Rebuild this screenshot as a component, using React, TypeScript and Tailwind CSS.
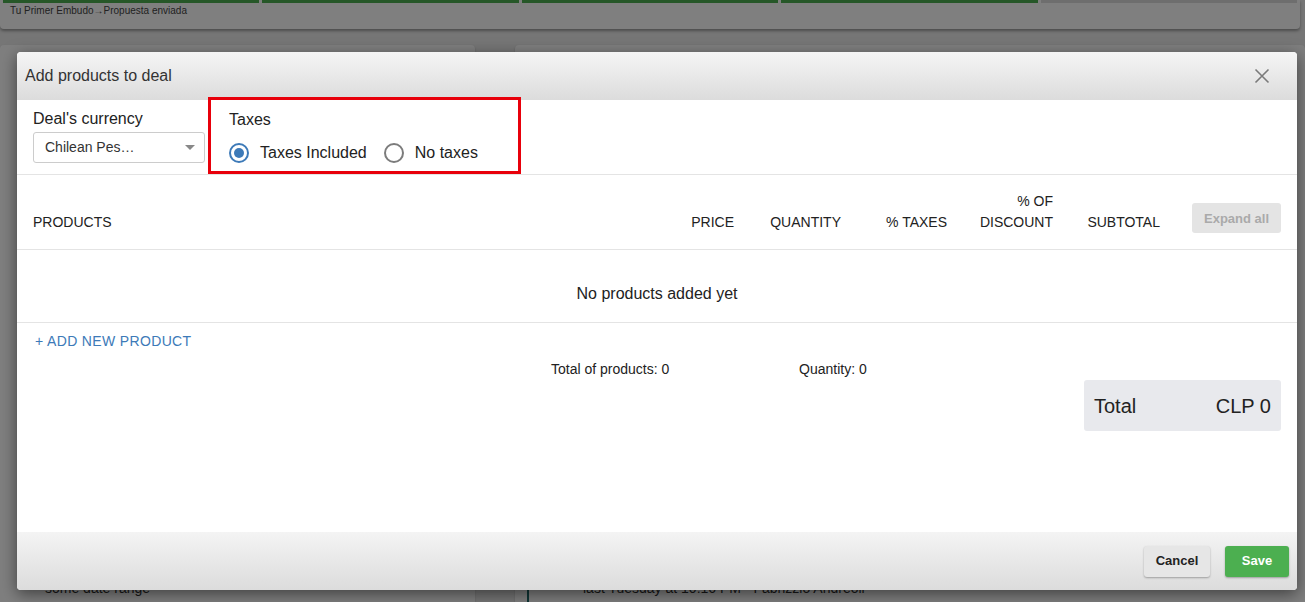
import React from 'react';

function Radio({ checked }: { checked: boolean }) {
  if (checked) {
    return (
      <span className="block shrink-0 w-[20px] h-[20px] rounded-full border-[2px] border-[#3d7ab8] flex items-center justify-center bg-white">
        <span className="block w-[10px] h-[10px] rounded-full bg-[#3d7ab8]" />
      </span>
    );
  }
  return <span className="block shrink-0 w-[20px] h-[20px] rounded-full border-[2px] border-[#7c7c7c] bg-white" />;
}

export default function App() {
  const columns = [
    { label: 'PRICE', w: 'w-[80px]' },
    { label: 'QUANTITY', w: 'w-[107px]' },
    { label: '% TAXES', w: 'w-[106px]' },
    { label: '% OF DISCOUNT', w: 'w-[106px]', two: true },
    { label: 'SUBTOTAL', w: 'w-[107px]' },
  ];

  return (
    <div className="relative w-[1305px] h-[602px] overflow-hidden bg-[#ececec] font-['Liberation_Sans',Arial,sans-serif] text-[#222]">
      {/* Page behind the dialog */}
      <div className="w-[1300px] h-[29px] bg-white rounded-b-[4px] shadow-[0_2px_3px_rgba(0,0,0,0.35)]">
        <div className="flex gap-[3px] px-[3px] h-[3px]">
          <div className="flex-1 bg-[#4caf50]" />
          <div className="flex-1 bg-[#4caf50]" />
          <div className="flex-1 bg-[#4caf50]" />
          <div className="flex-1 bg-[#4caf50]" />
          <div className="flex-1 bg-[#dcdcdc]" />
        </div>
        <div className="pl-[10px] pt-[2px] text-[10px] leading-[12px] text-[#444]">Tu Primer Embudo→Propuesta enviada</div>
      </div>
      <div className="flex gap-[40px] mt-[16px]">
        <div className="w-[475px] h-[560px] bg-white rounded-[4px] shadow-[0_1px_2px_rgba(0,0,0,0.2)] flex flex-col justify-end">
          <div className="pl-[45px] pb-[6px] text-[14px] text-[#333]">some date range</div>
        </div>
        <div className="flex-1 h-[560px] bg-white rounded-[4px] shadow-[0_1px_2px_rgba(0,0,0,0.2)] flex flex-col justify-end">
          <div className="flex items-end h-[62px] pl-[12px]">
            <div className="w-[2px] h-full bg-[#1f6d6d]" />
            <div className="pl-[54px] pb-[6px] text-[14px] text-[#333]">last Tuesday at 10:16 PM · Fabrizzio Andreoli</div>
          </div>
        </div>
      </div>

      {/* Overlay */}
      <div className="absolute inset-0 bg-black/50" />

      {/* Dialog */}
      <div className="absolute left-[17px] top-[52px] w-[1280px] h-[538px] bg-white rounded-[4px] shadow-[0_4px_16px_rgba(0,0,0,0.5)] flex flex-col">
        <div className="h-[48px] shrink-0 rounded-t-[4px] bg-gradient-to-b from-[#f5f5f5] to-[#dcdcdc] flex items-center justify-between pl-[8px] pr-[27px]">
          <span className="text-[16px] text-[#333]">Add products to deal</span>
          <svg width="16" height="16" viewBox="0 0 16 16" stroke="#7a7a7a" strokeWidth="1.6" fill="none">
            <path d="M1.5 1.5 L14.5 14.5 M14.5 1.5 L1.5 14.5" />
          </svg>
        </div>

        <div className="flex-1 flex flex-col">
          {/* Currency and taxes */}
          <div className="h-[75px] shrink-0 border-b border-[#e4e4e4] flex items-start pl-[16px]">
            <div className="w-[172px] pt-[9px]">
              <div className="text-[16px] leading-[20px]">Deal's currency</div>
              <div className="mt-[3px] h-[31px] border border-[#cccccc] rounded-[3px] flex items-center justify-between pl-[11px] pr-[9px]">
                <span className="text-[14px] text-[#333]">Chilean Pes…</span>
                <span className="w-0 h-0 border-l-[5px] border-r-[5px] border-t-[5px] border-l-transparent border-r-transparent border-t-[#888]" />
              </div>
            </div>
            <div className="ml-[3px] -mt-[3px] w-[313px] h-[77px] border-[3px] border-[#e8000b] pl-[18px] pt-[10px]">
              <div className="text-[16px] leading-[20px]">Taxes</div>
              <div className="flex items-center mt-[13px] text-[16px] leading-[20px]">
                <Radio checked />
                <span className="ml-[11px]">Taxes Included</span>
                <span className="ml-[17px] flex"><Radio checked={false} /></span>
                <span className="ml-[11px]">No taxes</span>
              </div>
            </div>
          </div>

          {/* Table header */}
          <div className="h-[75px] shrink-0 border-b border-[#e4e4e4] flex items-end pl-[16px] pr-[16px] pb-[16px] text-[14px] leading-[21px] text-[#222]">
            <div className="flex-1">PRODUCTS</div>
            {columns.map((c) => (
              <div key={c.label} className={`${c.w} text-right`}>
                {c.two ? (
                  <>
                    <div>% OF</div>
                    <div>DISCOUNT</div>
                  </>
                ) : (
                  c.label
                )}
              </div>
            ))}
            <button className="ml-[32px] w-[89px] h-[30px] rounded-[3px] bg-[#e4e4e4] text-[13px] font-bold text-[#aaaaaa]">
              Expand all
            </button>
          </div>

          {/* Empty state */}
          <div className="h-[73px] shrink-0 border-b border-[#e4e4e4] flex justify-center pt-[34px] text-[16px] leading-[20px] text-[#222]">
            No products added yet
          </div>

          <div className="pl-[18px] pt-[9px] text-[14px] leading-[18px] tracking-[0.35px] text-[#3d7ab8]">+ ADD NEW PRODUCT</div>

          <div className="flex pl-[534px] mt-[11px] text-[14px] leading-[17px] text-[#222]">
            <span className="w-[248px]">Total of products: 0</span>
            <span>Quantity: 0</span>
          </div>

          <div className="self-end mr-[16px] mt-[2px] w-[197px] h-[51px] rounded-[3px] bg-[#e8e9ed] flex items-center justify-between px-[10px] text-[20px] text-[#222]">
            <span>Total</span>
            <span>CLP 0</span>
          </div>
        </div>

        {/* Footer */}
        <div className="h-[58px] shrink-0 rounded-b-[4px] bg-gradient-to-b from-[#f4f4f4] to-[#dcdcdc] flex items-center justify-end gap-[15px] pr-[8px]">
          <button className="w-[66px] h-[31px] rounded-[3px] bg-[#e6e6e6] shadow-[0_1px_2px_rgba(0,0,0,0.3)] text-[13px] font-bold text-[#222]">
            Cancel
          </button>
          <button className="w-[64px] h-[31px] rounded-[3px] bg-[#4caf50] shadow-[0_1px_2px_rgba(0,0,0,0.3)] text-[13px] font-bold text-white">
            Save
          </button>
        </div>
      </div>
    </div>
  );
}
